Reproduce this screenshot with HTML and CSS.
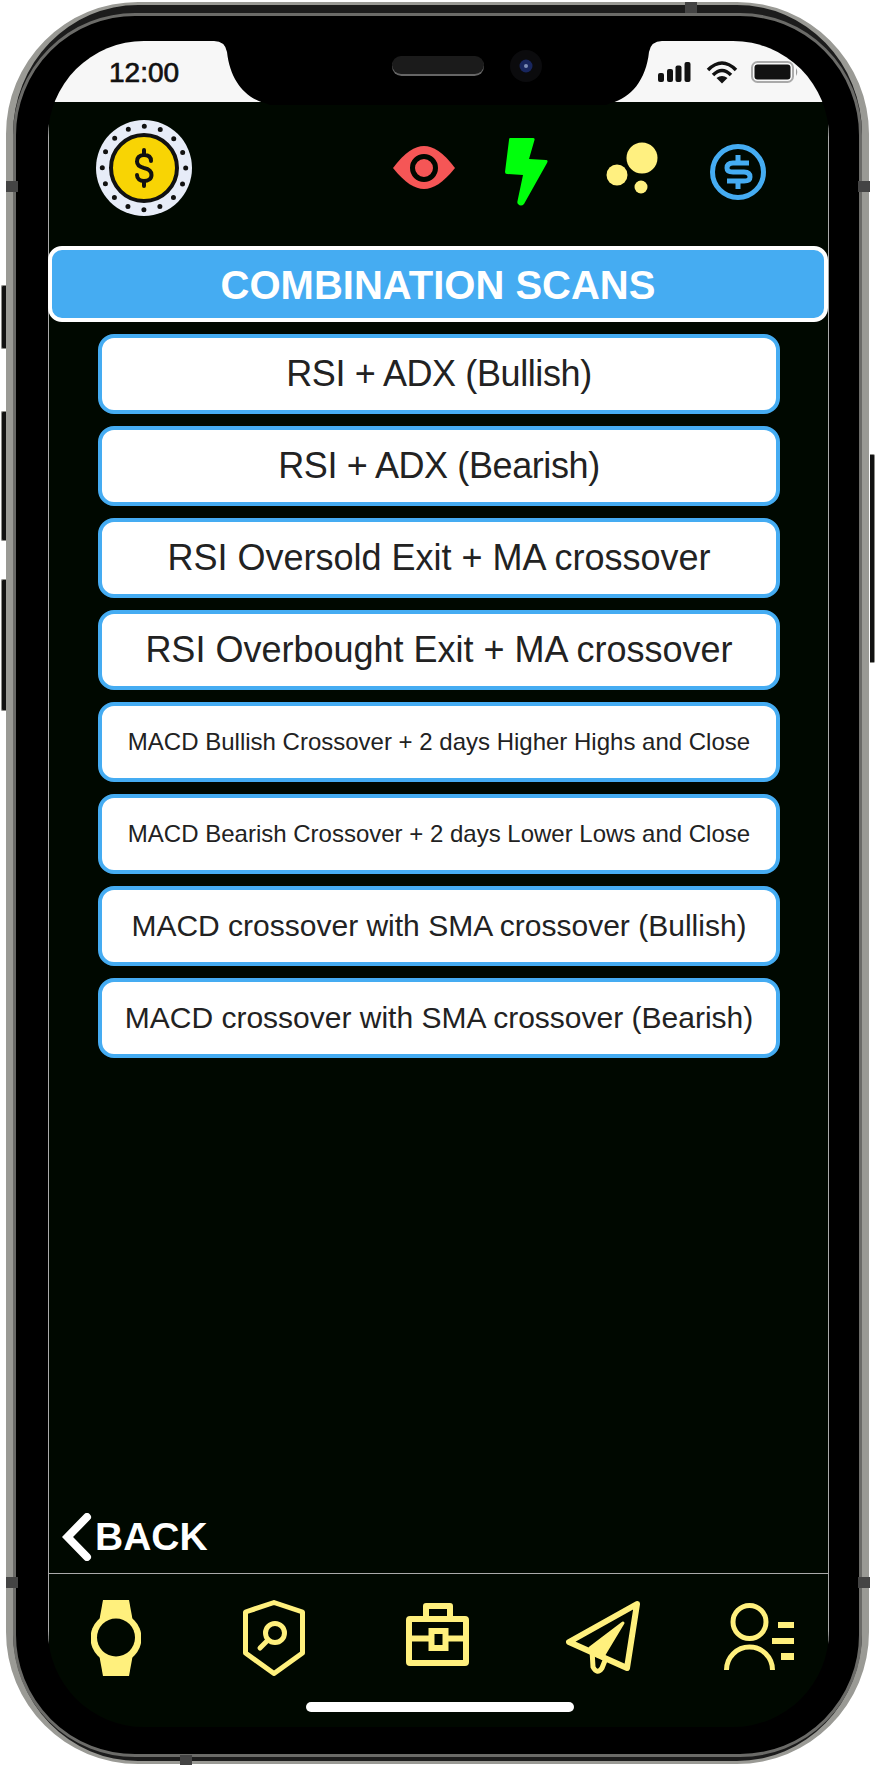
FILE: index.html

```html
<!DOCTYPE html>
<html>
  <head>
    <meta http-equiv="Content-Type" content="text/html; charset=UTF-8" />
    <title>Combination scans</title>
    <link rel="stylesheet" href="styles.css">
  </head>
  <body>
  <div class="device">
    <div class="key key-mute"></div>
    <div class="key key-up"></div>
    <div class="key key-down"></div>
    <div class="key key-power"></div>
    <div class="band band-tl"></div>
    <div class="band band-tr"></div>
    <div class="band band-bl"></div>
    <div class="band band-br"></div>
    <div class="band band-top"></div>
    <div class="band band-bottom"></div>

    <div class="phone">
      <div class="rim">
        <div class="screen">
          <div class="status">
            <span class="time">12:00</span>
            <svg class="status-icons" viewBox="658 60 141 25" width="141" height="25">
              <rect x="658" y="73" width="6" height="9" rx="2" fill="#111"/>
              <rect x="667" y="69" width="6" height="13" rx="2" fill="#111"/>
              <rect x="675.5" y="65.500" width="6" height="16.500" rx="2" fill="#111"/>
              <rect x="684.500" y="62" width="6" height="20" rx="2" fill="#111"/>
              <path d="M708,70 Q722,56 736,70" fill="none" stroke="#111" stroke-width="3.500"/>
              <path d="M713,75 Q722,66 731,75" fill="none" stroke="#111" stroke-width="3.500"/>
              <path d="M716.500,78 L722,83.500 L727.500,78 Q722,74 716.500,78Z" fill="#111"/>
              <rect x="752" y="62" width="41" height="20" rx="5.500" fill="none" stroke="#aaa" stroke-width="2"/>
              <rect x="754.500" y="64.500" width="36" height="15" rx="3" fill="#111"/>
              <path d="M796,68 Q798.500,72 796,76Z" fill="#999"/>
            </svg>
          </div>
          <svg class="notch" viewBox="214 41 448 64" width="448" height="64">
            <path d="M214,41 Q225,41 227,52 C230,80 245,98 265,103 L270,105 L606,105 L611,103 C631,98 646,80 649,52 Q651,41 662,41Z" fill="#000"/>
            <rect x="392" y="57" width="92" height="19" rx="9.500" fill="#666"/>
            <rect x="392" y="56" width="92" height="18" rx="9" fill="#1b1b1b"/>
            <circle cx="526" cy="66" r="16" fill="#0b0b0d"/>
            <circle cx="526" cy="66" r="6.500" fill="#18265e"/>
            <circle cx="526" cy="66" r="2" fill="#7f8fb8"/>
          </svg>

          <div class="main">
            <div class="topbar">
              <svg class="logo" viewBox="96 120 96 96" width="96" height="96">
                <circle cx="144" cy="168" r="48" fill="#e7ecf8"/>
                <circle cx="144" cy="168" r="41.700" fill="none" stroke="#111" stroke-width="5" stroke-linecap="round" stroke-dasharray="0 16.375"/>
                <circle cx="144" cy="168" r="33" fill="#f8d404" stroke="#111" stroke-width="4"/>
                <path d="M151,161 C151,156 147,155 144,155 C139,155 137,158 137,161.500 C137,165 140,167 144,168 C149,169 151.500,171 151.500,175 C151.500,179 148,181 144,181 C140,181 137,179 137,175 M144,150 V155 M144,181 V186" fill="none" stroke="#111" stroke-width="4" stroke-linecap="round"/>
              </svg>
              <svg class="icon-eye" viewBox="393 146 62 43" width="62" height="43">
                <path d="M393,168 C405,152 415,146 424,146 C433,146 443,152 455,168 C443,183 433,189 424,189 C415,189 405,183 393,168Z" fill="#f55656"/>
                <circle cx="424" cy="168" r="11.500" fill="#f55656" stroke="#000800" stroke-width="5"/>
              </svg>
              <svg class="icon-bolt" viewBox="505 138 43 68" width="43" height="68">
                <path d="M510,138 H533 Q535,138 534.500,140 L529,159 L546,160 Q548.500,160 547,163 L524,204 Q521,207 518,204 Q517,203 517.500,201 L523,175 L507,174 Q505,174 505,172 L509,140 Q509,138 510,138Z" fill="#00ff0c"/>
              </svg>
              <svg class="icon-bubbles" viewBox="606 142 52 52" width="52" height="52">
                <circle cx="642" cy="158" r="15.500" fill="#fff080"/>
                <circle cx="617" cy="175" r="10.500" fill="#fff080"/>
                <circle cx="641" cy="187" r="6.500" fill="#fff080"/>
              </svg>
              <svg class="icon-coin" viewBox="710 144 56 56" width="56" height="56">
                <circle cx="738" cy="172" r="25.500" fill="none" stroke="#45acf2" stroke-width="5"/>
                <path d="M749,163 H733 Q727,163 727,168 Q727,172 733,172 H744 Q750,172 750,177 Q750,181 744,181 H727 M738,155 V163 M738,181 V189" fill="none" stroke="#45acf2" stroke-width="5"/>
              </svg>
            </div>

            <div class="banner">COMBINATION SCANS</div>

            <div class="scan-list">
              <a class="scan scan-tight">RSI + ADX (Bullish)</a>
              <a class="scan scan-tight">RSI + ADX (Bearish)</a>
              <a class="scan">RSI Oversold Exit + MA crossover</a>
              <a class="scan">RSI Overbought Exit + MA crossover</a>
              <a class="scan scan-sm">MACD Bullish Crossover + 2 days Higher Highs and Close</a>
              <a class="scan scan-sm">MACD Bearish Crossover + 2 days Lower Lows and Close</a>
              <a class="scan scan-md">MACD crossover with SMA crossover (Bullish)</a>
              <a class="scan scan-md">MACD crossover with SMA crossover (Bearish)</a>
            </div>

            <div class="back">
              <svg viewBox="62 1512 30 48" width="30" height="48">
                <path d="M87,1516 L67.500,1536 L87,1556" fill="none" stroke="#fff" stroke-width="8" stroke-linecap="round"/>
              </svg>
              <span>BACK</span>
            </div>
          </div>

          <div class="nav">
            <div class="nav-icons">
              <svg class="nav-watch" viewBox="91 1600 50 76" width="50" height="76">
                <path d="M103,1600 H129 L133,1622 V1654 L129,1676 H103 L99,1654 V1622Z" fill="#fff07d"/>
                <circle cx="116" cy="1638" r="25.500" fill="#fff07d"/>
                <circle cx="116" cy="1637.500" r="19" fill="#000800"/>
              </svg>
              <svg class="nav-shield" viewBox="243 1600 62 76" width="62" height="76">
                <path d="M274,1602.500 L302.500,1612 V1653 L274,1673.500 L245.500,1653 V1612Z" fill="none" stroke="#fff07d" stroke-width="5" stroke-linejoin="round"/>
                <circle cx="275" cy="1633" r="9.500" fill="none" stroke="#fff07d" stroke-width="5"/>
                <path d="M268,1640 L260,1648" fill="none" stroke="#fff07d" stroke-width="5" stroke-linecap="round"/>
              </svg>
              <svg class="nav-case" viewBox="406 1600 64 76" width="64" height="76">
                <rect x="409" y="1619" width="57" height="44" rx="1" fill="none" stroke="#fff07d" stroke-width="6"/>
                <path d="M426,1618 V1606 H450 V1618" fill="none" stroke="#fff07d" stroke-width="6" stroke-linejoin="round"/>
                <path d="M409,1638.500 H466" fill="none" stroke="#fff07d" stroke-width="6"/>
                <rect x="431.500" y="1631" width="14" height="17" fill="#000800" stroke="#fff07d" stroke-width="6"/>
              </svg>
              <svg class="nav-plane" viewBox="566 1600 76 76" width="76" height="76">
                <path d="M637,1604 L569,1642 L627,1668Z" fill="none" stroke="#fff07d" stroke-width="6" stroke-linejoin="round"/>
                <path d="M623,1623 L590,1648 L602,1658Z" fill="#fff07d" stroke="#fff07d" stroke-width="3" stroke-linejoin="round"/>
                <path d="M592,1650 L593,1667 Q597,1675 602,1668 L606,1658" fill="none" stroke="#fff07d" stroke-width="5" stroke-linejoin="round"/>
              </svg>
              <svg class="nav-person" viewBox="724 1600 70 76" width="70" height="76">
                <circle cx="749.500" cy="1622" r="16.500" fill="none" stroke="#fff07d" stroke-width="5"/>
                <path d="M726.500,1670 A23,23 0 0 1 772.500,1670" fill="none" stroke="#fff07d" stroke-width="5"/>
                <rect x="778" y="1622" width="16" height="6" fill="#fff07d"/>
                <rect x="772" y="1638" width="22" height="6" fill="#fff07d"/>
                <rect x="781" y="1653" width="13" height="7" fill="#fff07d"/>
              </svg>
            </div>
            <div class="home"></div>
          </div>
        </div>
      </div>
    </div>
  </div>
  </body>
</html>
```

FILE: styles.css

```css
html, body {
  margin: 0;
  background: #fff;
}
body {
  font-family: "Liberation Sans", Arial, sans-serif;
}
svg {
  display: block;
  flex: none;
}
.device {
  position: relative;
  width: 876px;
  height: 1768px;
  overflow: hidden;
}
.phone {
  box-sizing: border-box;
  width: 863px;
  height: 1762px;
  margin: 2px 0 0 6px;
  padding: 8px 0 4px;
  border-style: solid;
  border-width: 3px 7px;
  border-color: #9a9a95;
  border-radius: 132px;
  background: #1c1c1c;
}
.rim {
  box-sizing: border-box;
  height: 100%;
  padding: 25px 0 0 32px;
  border: 3px solid #6b6b68;
  border-radius: 122px;
  background: #000;
}
.screen {
  position: relative;
  display: flex;
  flex-direction: column;
  width: 781px;
  height: 1686px;
  border-radius: 96px;
  overflow: hidden;
  background: #000800;
}

/* status bar */
.status {
  display: flex;
  justify-content: space-between;
  box-sizing: border-box;
  height: 61px;
  padding: 19px 30px 0 61px;
  background: #f7f7f7;
}
.time {
  font-size: 28px;
  line-height: 25px;
  color: #111;
  -webkit-text-stroke: 0.7px #111;
}
.notch {
  position: absolute;
  top: 0;
  left: 166px;
}

/* main part */
.main {
  display: flex;
  flex-direction: column;
  height: 1471px;
  border-left: 1px solid #aaa;
  border-right: 1px solid #aaa;
  border-bottom: 1px solid #aaa;
}
.topbar {
  display: flex;
  height: 144px;
  padding-left: 47px;
}
.logo { margin-top: 18px; }
.icon-eye { margin: 44px 0 0 201px; }
.icon-bolt { margin: 36px 0 0 50px; }
.icon-bubbles { margin: 40px 0 0 58px; }
.icon-coin { margin: 42px 0 0 52px; }

.banner {
  box-sizing: border-box;
  height: 76px;
  margin-left: -1px;
  border: 4px solid #fff;
  border-radius: 14px;
  background: #45acf2;
  color: #fff;
  font-size: 40px;
  font-weight: bold;
  line-height: 71px;
  text-align: center;
}
.scan-list {
  display: flex;
  flex-direction: column;
  gap: 12px;
  margin: 12px 48px 0 49px;
}
.scan {
  box-sizing: border-box;
  display: flex;
  align-items: center;
  justify-content: center;
  height: 80px;
  border: 4px solid #45acf2;
  border-radius: 16px;
  background: #fff;
  color: #222;
  font-size: 36px;
  white-space: nowrap;
}
.scan-tight {
  letter-spacing: -0.4px;
}
.scan-md {
  font-size: 30px;
}
.scan-sm {
  font-size: 24px;
}
.back {
  display: flex;
  align-items: center;
  gap: 3px;
  margin-top: auto;
  margin-bottom: 12px;
  padding-left: 13px;
  color: #fff;
  font-size: 39px;
  font-weight: bold;
}

/* bottom nav */
.nav {
  flex: 1;
  border-left: 1px solid #aaa;
  border-right: 1px solid #aaa;
}
.nav-icons {
  display: flex;
  padding: 26px 0 0 42px;
}
.nav-shield { margin-left: 102px; }
.nav-case { margin-left: 101px; }
.nav-plane { margin-left: 96px; }
.nav-person { margin-left: 82px; }
.home {
  width: 268px;
  height: 10px;
  margin: 26px 0 0 257px;
  border-radius: 5px;
  background: #fff;
}

/* hardware bits round the frame */
.key {
  position: absolute;
  width: 4px;
  border: 1px solid #8c8c88;
  border-right: none;
  border-radius: 2px 0 0 2px;
  background: #111;
}
.key-mute { left: 1px; top: 285px; height: 62px; }
.key-up { left: 1px; top: 411px; height: 128px; }
.key-down { left: 1px; top: 579px; height: 130px; }
.key-power {
  left: 870px;
  top: 454px;
  height: 207px;
  border: 1px solid #8c8c88;
  border-left: none;
  border-radius: 0 2px 2px 0;
}
.band {
  position: absolute;
  background: #444;
}
.band-tl { left: 6px; top: 181px; width: 12px; height: 11px; }
.band-tr { left: 858px; top: 181px; width: 12px; height: 11px; }
.band-bl { left: 6px; top: 1577px; width: 12px; height: 11px; }
.band-br { left: 858px; top: 1577px; width: 12px; height: 11px; }
.band-top { left: 685px; top: 2px; width: 12px; height: 11px; }
.band-bottom { left: 180px; top: 1755px; width: 12px; height: 10px; }
```
